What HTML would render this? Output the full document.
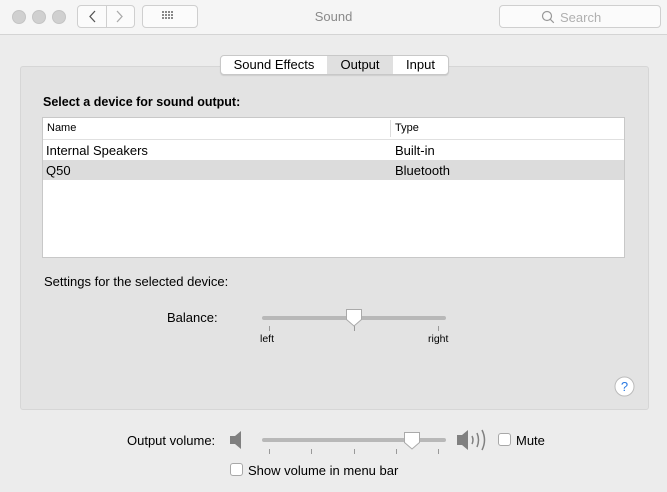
<!DOCTYPE html><html><head><style>
body{margin:0;width:667px;height:492px;background:#ececec;font-family:"Liberation Sans",sans-serif;font-size:13px;color:#000;position:relative;overflow:hidden}
.a{position:absolute}
.tb{left:0;top:0;width:667px;height:34px;background:#f5f5f5;border-bottom:1px solid #d4d4d4}
.dot{width:12px;height:12px;border-radius:50%;background:#d0d0d0;border:1px solid #c4c4c4;top:10px}
.btn{border:1px solid #cfcfcf;border-radius:4px;background:#fbfbfb;box-sizing:border-box}
.panel{left:20px;top:66px;width:629px;height:344px;background:#e3e3e3;border:1px solid #d6d6d6;box-sizing:border-box;border-radius:3px}
.tab{top:55px;height:20px;left:220px;width:229px;border:1px solid #c8c8c8;border-radius:4px;background:#fff;box-sizing:border-box;display:flex;font-size:13px;line-height:18px;box-shadow:0 1px 1px rgba(0,0,0,.1)}
.tab div{text-align:center}
.tbl{left:42px;top:117px;width:583px;height:141px;background:#fff;border:1px solid #c8c8c8;box-sizing:border-box}
.cb{width:13px;height:13px;border:1px solid #a8a8a8;border-radius:3px;background:#fff;box-sizing:border-box}
.track{height:4px;background:#b8b8b8;border-radius:2px}
.tick{width:1px;height:5px;background:#999}
</style></head><body>
<div class="a tb"></div>
<div class="a dot" style="left:12px"></div><div class="a dot" style="left:32px"></div><div class="a dot" style="left:52px"></div>
<div class="a btn" style="left:77px;top:5px;width:58px;height:23px"></div>
<div class="a" style="left:106px;top:5px;width:1px;height:23px;background:#cfcfcf"></div>
<svg class="a" style="left:77px;top:5px" width="58" height="23"><path d="M18 6l-5 5.5 5 5.5" stroke="#555" stroke-width="1.3" fill="none"/><path d="M40 6l5 5.5-5 5.5" stroke="#aaa" stroke-width="1.3" fill="none"/></svg>
<div class="a btn" style="left:142px;top:5px;width:56px;height:23px"></div>
<svg class="a" style="left:162px;top:11px" width="16" height="11"><g fill="#888"><rect x="0" y="0" width="2" height="2"/><rect x="3" y="0" width="2" height="2"/><rect x="6" y="0" width="2" height="2"/><rect x="9" y="0" width="2" height="2"/><rect x="0" y="3" width="2" height="2"/><rect x="3" y="3" width="2" height="2"/><rect x="6" y="3" width="2" height="2"/><rect x="9" y="3" width="2" height="2"/><rect x="0" y="6" width="2" height="2"/><rect x="3" y="6" width="2" height="2"/><rect x="6" y="6" width="2" height="2"/><rect x="9" y="6" width="2" height="2"/></g></svg>
<div class="a" style="left:0;width:667px;top:9px;text-align:center;color:#8a8a8a;font-size:13px">Sound</div>
<div class="a btn" style="left:499px;top:5px;width:162px;height:23px"></div>
<svg class="a" style="left:541px;top:10px" width="14" height="14"><circle cx="6" cy="6" r="4.5" stroke="#999" fill="none" stroke-width="1.2"/><path d="M9.3 9.3l3.5 3.5" stroke="#999" stroke-width="1.2"/></svg>
<div class="a" style="left:560px;top:10px;color:#b0b0b0">Search</div>
<div class="a panel"></div>
<div class="a tab"><div style="width:106px">Sound Effects</div><div style="width:66px;background:#e0e0e0">Output</div><div style="width:55px">Input</div></div>
<div class="a" style="left:43px;top:95px;font-weight:bold;font-size:12.5px">Select a device for sound output:</div>
<div class="a tbl"></div>
<div class="a" style="left:43px;top:139px;width:581px;height:1px;background:#e0e0e0"></div>
<div class="a" style="left:390px;top:120px;width:1px;height:17px;background:#ddd"></div>
<div class="a" style="left:47px;top:122px;font-size:11px">Name</div>
<div class="a" style="left:395px;top:122px;font-size:11px">Type</div>
<div class="a" style="left:43px;top:160px;width:581px;height:20px;background:#dcdcdc"></div>
<div class="a" style="left:46px;top:143px">Internal Speakers</div><div class="a" style="left:395px;top:143px">Built-in</div>
<div class="a" style="left:46px;top:163px">Q50</div><div class="a" style="left:395px;top:163px">Bluetooth</div>
<div class="a" style="left:44px;top:274px">Settings for the selected device:</div>
<div class="a" style="left:167px;top:310px">Balance:</div>
<div class="a track" style="left:262px;top:316px;width:184px"></div>
<div class="a tick" style="left:269px;top:326px"></div><div class="a tick" style="left:438px;top:326px"></div><div class="a tick" style="left:354px;top:326px"></div>
<svg class="a" style="left:344px;top:308px" width="20" height="20"><path d="M2.5 1.5h15v10l-7.5 6.5-7.5-6.5z" fill="#fff" stroke="#aaa"/></svg>
<div class="a" style="left:260px;top:333px;font-size:10.5px">left</div>
<div class="a" style="left:428px;top:333px;font-size:10.5px">right</div>
<svg class="a" style="left:614px;top:376px" width="21" height="21"><circle cx="10.5" cy="10.5" r="9.5" fill="#fff" stroke="#bbb"/><text x="10.5" y="15" text-anchor="middle" font-size="13" fill="#2a7ae2" font-family="Liberation Sans">?</text></svg>
<div class="a" style="left:127px;top:433px">Output volume:</div>
<svg class="a" style="left:229px;top:429px" width="16" height="22"><path d="M1 7h5l6-5v18l-6-5H1z" fill="#808080"/></svg>
<div class="a track" style="left:262px;top:438px;width:184px"></div>
<div class="a tick" style="left:269px;top:449px"></div><div class="a tick" style="left:311px;top:449px"></div><div class="a tick" style="left:354px;top:449px"></div><div class="a tick" style="left:396px;top:449px"></div><div class="a tick" style="left:438px;top:449px"></div>
<svg class="a" style="left:402px;top:431px" width="20" height="20"><path d="M2.5 1.5h15v10l-7.5 6.5-7.5-6.5z" fill="#fff" stroke="#aaa"/></svg>
<svg class="a" style="left:456px;top:427px" width="34" height="26"><path d="M1 8h5l6-5v20l-6-5H1z" fill="#808080"/><path d="M16 9q2 4 0 8M21 6q3 7 0 14M26 3q5 10 0 20" stroke="#808080" stroke-width="1.5" fill="none"/></svg>
<div class="a cb" style="left:498px;top:433px"></div><div class="a" style="left:516px;top:433px">Mute</div>
<div class="a cb" style="left:230px;top:463px"></div><div class="a" style="left:248px;top:463px">Show volume in menu bar</div>
</body></html>
